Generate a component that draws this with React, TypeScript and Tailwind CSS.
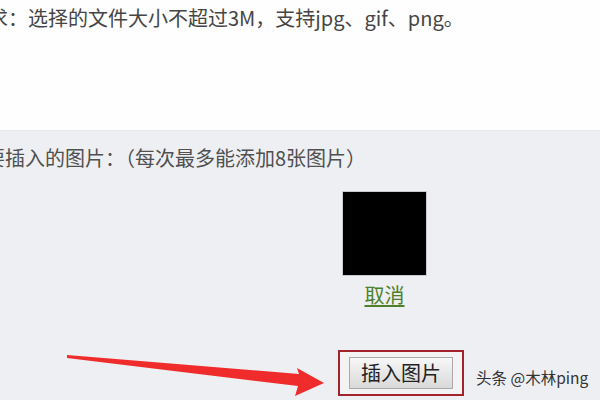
const cjk = { fontFamily: '"Noto Sans CJK SC", "Noto Sans", sans-serif' };

const RedArrow = () => (
    <svg className="absolute left-0 top-0 pointer-events-none" width="600" height="400" viewBox="0 0 600 400">
        <polygon
            points="67,355 299,374 297,368 324,383 295,396 298,386 67,358"
            fill="#f02b2b"
        />
    </svg>
);

export default function App() {
    return (
        <div className="relative w-[600px] h-[400px] overflow-hidden bg-[#fefefe]" style={cjk}>
            <div className="h-[130px] pt-[6px]">
                <div className="ml-[-12px] text-[20px] leading-[24px] text-[#454545] whitespace-nowrap">
                    求：选择的文件大小不超过3M，支持jpg、gif、png。
                </div>
            </div>

            <div className="h-[270px] bg-[#edeff3] border-t border-[#e6e8ec] pt-[15px]">
                <div className="ml-[-15px] text-[20px] leading-[24px] text-[#505050] whitespace-nowrap">
                    要插入的图片：（每次最多能添加8张图片）
                </div>

                <div className="mt-[21px] ml-[342px] w-[85px] flex flex-col items-center">
                    <div className="w-[85px] h-[85px] bg-black border border-[#c9cbd0]" />
                    <a className="mt-[7px] text-[20px] leading-[24px] text-[#4f7f2a] underline underline-offset-2">
                        取消
                    </a>
                </div>

                <div className="mt-[43px] ml-[338px] flex items-center">
                    <div className="border-2 border-[#a3232d] px-[9px] py-[5px] bg-[#f3f3f3]">
                        <button className="w-[104px] h-[32px] border border-[#a9a9a9] bg-gradient-to-b from-[#f7f7f7] to-[#d9d9d9] text-[20px] leading-[24px] text-[#222]">
                            插入图片
                        </button>
                    </div>
                </div>
            </div>

            <RedArrow />

            <div className="absolute left-[476px] top-[367px] text-[15.5px] leading-[20px] text-[#333] whitespace-nowrap">
                头条 @木林ping
            </div>
        </div>
    );
}
